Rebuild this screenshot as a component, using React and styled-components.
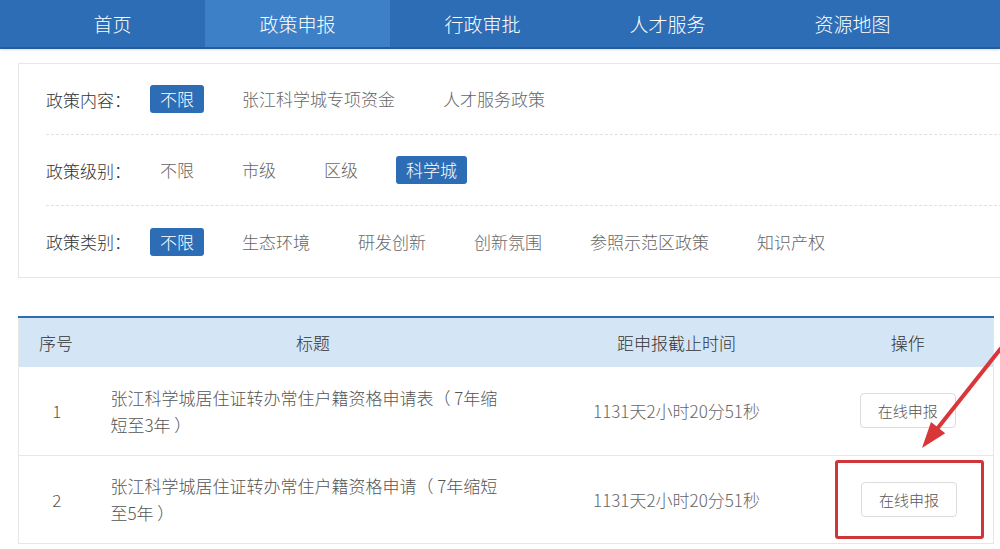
import React from "react";
import styled, { createGlobalStyle } from "styled-components";

const GlobalStyle = createGlobalStyle`
  html, body {
    margin: 0;
    padding: 0;
    background: #fff;
    overflow: hidden;
  }
  body {
    font-family: "Noto Sans CJK SC", "Microsoft YaHei", sans-serif;
    font-weight: 300;
    color: #333;
  }
  * {
    box-sizing: border-box;
  }
`;

const tabs = ["首页", "政策申报", "行政审批", "人才服务", "资源地图"];

const filters = [
  { label: "政策内容：", options: ["不限", "张江科学城专项资金", "人才服务政策"], active: 0 },
  { label: "政策级别：", options: ["不限", "市级", "区级", "科学城"], active: 3 },
  {
    label: "政策类别：",
    options: ["不限", "生态环境", "研发创新", "创新氛围", "参照示范区政策", "知识产权"],
    active: 0,
  },
];

const rows = [
  {
    no: 1,
    title: "张江科学城居住证转办常住户籍资格申请表（ 7年缩短至3年 ）",
    time: "1131天2小时20分51秒",
  },
  {
    no: 2,
    title: "张江科学城居住证转办常住户籍资格申请（ 7年缩短至5年 ）",
    time: "1131天2小时20分51秒",
    marked: true,
  },
];

export default function App() {
  return (
    <Page>
      <GlobalStyle />
      <NavBar>
        {tabs.map((t, i) => (
          <NavTab key={t} $active={i === 1}>
            {t}
          </NavTab>
        ))}
      </NavBar>

      <FilterBox>
        {filters.map((f) => (
          <FilterRow key={f.label}>
            <FilterLabel>{f.label}</FilterLabel>
            {f.options.map((o, i) => (
              <FilterOption key={o} $active={i === f.active}>
                {o}
              </FilterOption>
            ))}
          </FilterRow>
        ))}
      </FilterBox>

      <TableWrap>
        <PolicyTable>
          <colgroup>
            <col style={{ width: 77 }} />
            <col style={{ width: 435 }} />
            <col style={{ width: 292 }} />
            <col style={{ width: 171 }} />
          </colgroup>
          <thead>
            <tr>
              <HeadCell>序号</HeadCell>
              <HeadCell>标题</HeadCell>
              <HeadCell>距申报截止时间</HeadCell>
              <HeadCell>操作</HeadCell>
            </tr>
          </thead>
          <tbody>
            {rows.map((r) => (
              <tr key={r.no}>
                <NoCell>{r.no}</NoCell>
                <TitleCell>{r.title}</TitleCell>
                <TimeCell>{r.time}</TimeCell>
                <ActionCell>
                  {r.marked ? (
                    <MarkBox>
                      <ApplyButton>在线申报</ApplyButton>
                    </MarkBox>
                  ) : (
                    <ApplyButton>在线申报</ApplyButton>
                  )}
                </ActionCell>
              </tr>
            ))}
          </tbody>
        </PolicyTable>
        <Arrow viewBox="0 0 120 130" width="120" height="130">
          <line x1="106" y1="12" x2="37" y2="99" stroke="#d9363a" strokeWidth="4" />
          <polygon points="22,118 45.2,103.2 31,92" fill="#d9363a" />
        </Arrow>
      </TableWrap>
    </Page>
  );
}

const Page = styled.div`
  width: 1000px;
  height: 549px;
  overflow: hidden;
`;

const NavBar = styled.nav`
  display: flex;
  height: 49px;
  padding-left: 20px;
  background: #2c6db6;
  border-bottom: 2px solid #245d9c;
  box-shadow: 0 1px 2px rgba(0, 0, 0, 0.15);
`;

const NavTab = styled.div`
  width: 185px;
  display: flex;
  align-items: center;
  justify-content: center;
  font-size: 19px;
  color: #fff;
  background: ${(p) => (p.$active ? "#3e80c7" : "transparent")};
`;

const FilterBox = styled.div`
  width: 1000px;
  margin: 14px 0 0 18px;
  padding: 0 0 0 27px;
  border: 1px solid #e6e6e6;
`;

const FilterRow = styled.div`
  display: flex;
  align-items: center;
  height: 71px;
  border-bottom: 1px dashed #e0e0e0;

  &:last-child {
    border-bottom: none;
  }
`;

const FilterLabel = styled.span`
  width: 104px;
  font-size: 17px;
  color: #333;
`;

const FilterOption = styled.span`
  height: 28px;
  line-height: 28px;
  padding: 0 10px;
  margin-right: 28px;
  font-size: 17px;
  border-radius: 3px;
  color: ${(p) => (p.$active ? "#fff" : "#666")};
  background: ${(p) => (p.$active ? "#2c6db6" : "transparent")};
`;

const TableWrap = styled.div`
  position: relative;
  margin: 38px 0 0 18px;
  width: 975px;
`;

const PolicyTable = styled.table`
  width: 975px;
  table-layout: fixed;
  border-collapse: collapse;
  border-top: 2px solid #2f6db0;
  border-left: 1px solid #e6e6e6;
  border-right: 1px solid #e6e6e6;
`;

const HeadCell = styled.th`
  height: 50px;
  background: #d4e5f6;
  font-size: 17px;
  font-weight: 300;
  color: #333;
  text-align: center;
  &:first-child {
    text-align: left;
    padding-left: 20px;
  }
`;

const BodyCell = styled.td`
  height: 88px;
  border-bottom: 1px solid #e6e6e6;
  font-size: 17px;
  color: #555;
  vertical-align: middle;
`;

const NoCell = styled(BodyCell)`
  text-align: center;
  padding-right: 2px;
`;

const TitleCell = styled(BodyCell)`
  padding: 0 22px 0 15px;
  line-height: 27px;
`;

const TimeCell = styled(BodyCell)`
  text-align: center;
  color: #666;
`;

const ActionCell = styled(BodyCell)`
  text-align: center;
`;

const MarkBox = styled.div`
  display: flex;
  align-items: center;
  justify-content: center;
  width: 149px;
  height: 79px;
  margin-left: 11px;
  border: 3px solid #d0353a;
  border-radius: 3px;
`;

const ApplyButton = styled.button`
  width: 96px;
  height: 35px;
  padding: 0;
  background: #fff;
  border: 1px solid #dcdcdc;
  border-radius: 4px;
  font-family: inherit;
  font-weight: 300;
  font-size: 15px;
  color: #555;
`;

const Arrow = styled.svg`
  position: absolute;
  top: 14px;
  left: 882px;
  pointer-events: none;
`;
